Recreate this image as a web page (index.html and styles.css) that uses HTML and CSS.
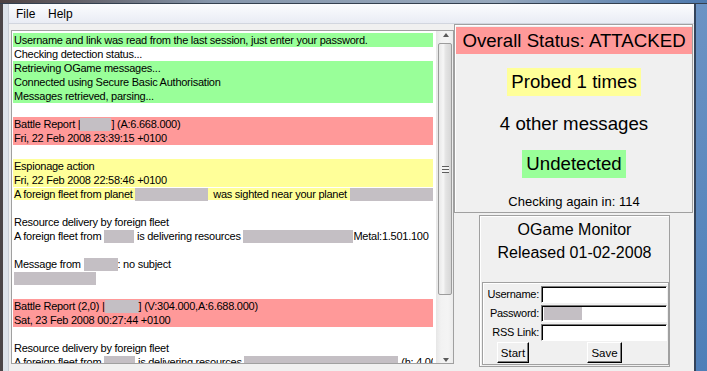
FILE: index.html
```html
<!DOCTYPE html>
<html>
<head>
<meta charset="utf-8">
<title>OGame Monitor</title>
<link rel="stylesheet" href="styles.css">
</head>
<body>
<div class="screen">
  <div class="frame-top"></div>
  <div class="row">
    <div class="frame-left"></div>
    <div class="window">
      <div class="menubar"><span class="menu-item">File</span><span class="menu-item">Help</span></div>
      <div class="client">
        <div class="listbox">
          <div class="items">
            <div class="item green">Username and link was read from the last session, just enter your password.</div>
            <div class="item">Checking detection status...</div>
            <div class="item green">Retrieving OGame messages...</div>
            <div class="item green">Connected using Secure Basic Authorisation</div>
            <div class="item green">Messages retrieved, parsing...</div>
            <div class="item"></div>
            <div class="item pink">Battle Report |<span class="r w31"></span>] (A:6.668.000)</div>
            <div class="item pink">Fri, 22 Feb 2008 23:39:15 +0100</div>
            <div class="item"></div>
            <div class="item yellow">Espionage action</div>
            <div class="item yellow">Fri, 22 Feb 2008 22:58:46 +0100</div>
            <div class="item"><span class="yellow">A foreign fleet from planet <span class="r w73 gap"></span> was sighted near your planet </span><span class="r w90"></span></div>
            <div class="item"></div>
            <div class="item">Resource delivery by foreign fleet</div>
            <div class="item">A foreign fleet from <span class="r w30"></span> is delivering resources <span class="r w110"></span>Metal:1.501.100</div>
            <div class="item"></div>
            <div class="item">Message from <span class="r w34"></span>: no subject</div>
            <div class="item"><span class="r w82"></span></div>
            <div class="item"></div>
            <div class="item pink">Battle Report (2,0) |<span class="r w34"></span>] (V:304.000,A:6.688.000)</div>
            <div class="item pink">Sat, 23 Feb 2008 00:27:44 +0100</div>
            <div class="item"></div>
            <div class="item">Resource delivery by foreign fleet</div>
            <div class="item">A foreign fleet from <span class="r w31"></span> is delivering resources <span class="r w154"></span> (h: 4.000)</div>
          </div>
          <div class="vscroll">
            <div class="arrow-box top"><div class="tri up"></div></div>
            <div class="thumb"><div class="grip"></div></div>
            <div class="track-rest"></div>
            <div class="arrow-box bottom"><div class="tri down"></div></div>
          </div>
        </div>
        <div class="side">
          <div class="status">
            <div class="banner">Overall Status: ATTACKED</div>
            <div class="s-row probed"><span class="badge yellow">Probed 1 times</span></div>
            <div class="s-row others">4 other messages</div>
            <div class="s-row detect"><span class="badge green">Undetected</span></div>
            <div class="checking">Checking again in: 114</div>
          </div>
          <div class="about">
            <div class="title">OGame Monitor</div>
            <div class="title">Released 01-02-2008</div>
            <div class="form">
              <div class="fields">
                <label class="lbl">Username:</label><div class="input"></div>
                <label class="lbl">Password:</label><div class="input"><span class="masked"></span></div>
                <label class="lbl">RSS Link:</label><div class="input"></div>
              </div>
              <div class="buttons">
                <button class="btn start">Start</button>
                <button class="btn save">Save</button>
              </div>
            </div>
          </div>
        </div>
      </div>
    </div>
    <div class="frame-right"></div>
  </div>
</div>
</body>
</html>
```

FILE: styles.css
```css
* { box-sizing: border-box; margin: 0; padding: 0; }
html, body { width: 707px; height: 371px; overflow: hidden; }
body {
  background: #f0f0f0;
  font-family: "Liberation Sans", Arial, sans-serif;
  color: #000;
}
.screen { width: 707px; height: 371px; display: flex; flex-direction: column; }
.frame-top {
  height: 4px;
  background: linear-gradient(to right, #4f4242 0, #8696ab 30%, #97a8bc 70%, #4d79ae 100%);
  border-bottom: 1px solid #34404f;
}
.row { flex: 1; display: flex; min-height: 0; }
.frame-left {
  width: 9px;
  background: linear-gradient(to right, #4b4547 0 3px, #dde3ea 3px 8px, #c9ced6 8px);
}
.frame-right {
  width: 13px;
  border-left: 2px solid #33435a;
  background: linear-gradient(#6b93c4, #4f7fb8);
}
.window { width: 685px; display: flex; flex-direction: column; background: #f0f0f0; }
.menubar {
  height: 20px;
  display: flex;
  gap: 12.7px;
  padding: 1px 0 0 7px;
  line-height: 19px;
  font-size: 12px;
  background: linear-gradient(#fbfcfe, #e9ecf4);
  border-bottom: 1px solid #d2d6df;
}
.client { flex: 1; display: flex; min-height: 0; }

.listbox {
  margin: 6px 0 0 2px;
  width: 443px;
  height: 334px;
  border: 1px solid #a0a0a0;
  background: #fff;
  display: flex;
}
.items {
  width: 420px;
  margin-left: 1px;
  padding-top: 2px;
  overflow: hidden;
  font-size: 11px;
  letter-spacing: -0.25px;
}
.item {
  height: 14px;
  line-height: 14px;
  padding-left: 1px;
  white-space: nowrap;
  overflow: hidden;
}
.green { background: #99ff99; }
.pink { background: #ff9999; }
.yellow { background: #ffff99; }
.r {
  display: inline-block;
  vertical-align: top;
  margin-top: 1px;
  height: 13px;
  background: #c4bfc4;
}
.gap { margin-right: 2px; }
.w30 { width: 30px; } .w31 { width: 31px; } .w34 { width: 34px; }
.w73 { width: 73px; } .w82 { width: 82px; } .w90 { width: 90px; }
.w110 { width: 110px; } .w154 { width: 154px; }

.vscroll {
  width: 17px;
  margin-left: 3px;
  display: flex;
  flex-direction: column;
  background: linear-gradient(to right, #e6e6e6, #f2f2f2 30%, #f4f4f4 70%, #ececec);
}
.arrow-box { height: 12px; display: flex; justify-content: center; padding-left: 3px; }
.arrow-box.top { align-items: flex-start; padding-top: 2px; }
.arrow-box.bottom { align-items: flex-end; padding-bottom: 1px; }
.tri { width: 0; height: 0; border-left: 3.5px solid transparent; border-right: 3.5px solid transparent; }
.tri.up { border-bottom: 4px solid #5a5a5a; }
.tri.down { border-top: 4px solid #5a5a5a; }
.thumb {
  margin: 0 1px 0 2px;
  height: 252px;
  border: 1px solid #9c9c9c;
  border-radius: 2px;
  background: linear-gradient(to right, #e8e8e8, #f6f6f6 35%, #e4e4e4 55%, #d6d6d6);
  display: flex;
  align-items: center;
  justify-content: center;
}
.grip {
  width: 7px;
  height: 7px;
  background: repeating-linear-gradient(#5e5e5e 0 1px, #f4f4f4 1px 3px);
}
.track-rest { flex: 1; }

.side { width: 240px; display: flex; flex-direction: column; }
.status {
  width: 239px;
  height: 189px;
  border: 1px solid #a0a0a0;
  box-shadow: inset 1px 1px 0 #fff;
  padding: 2px 0 2px 1px;
  text-align: center;
  font-size: 14pt;
}
.banner { height: 27px; line-height: 27px; background: #ff9999; white-space: nowrap; }
.s-row { display: flex; justify-content: center; }
.badge { height: 28px; line-height: 28px; padding: 0 4px; }
.probed { margin-top: 14px; }
.others { margin-top: 14px; height: 27px; line-height: 27px; }
.detect { margin-top: 13px; }
.checking { margin-top: 16px; font-size: 13px; line-height: 16px; }

.about {
  margin: 2px 0 0 25px;
  width: 191px;
  border: 1px solid #a0a0a0;
  box-shadow: inset 1px 1px 0 #fff;
  padding: 2px 0 1px 0;
}
.title { font-size: 16px; line-height: 23px; text-align: center; }
.form {
  margin: 18px 0 0 2px;
  width: 187px;
  border: 1px solid #a0a0a0;
  box-shadow: inset 1px 1px 0 #fff;
  padding: 3px 1px 1px 1px;
  display: flex;
  flex-direction: column;
}
.fields {
  display: grid;
  grid-template-columns: 55px 126px;
  column-gap: 2px;
  row-gap: 2px;
  font-size: 11px;
  letter-spacing: -0.25px;
}
.lbl { text-align: right; line-height: 17px; white-space: nowrap; }
.input {
  height: 17px;
  background: #fff;
  border: 1px solid;
  border-color: #7a7a7a #fff #fff #7a7a7a;
  box-shadow: inset 1px 1px 0 #000;
  padding: 1px 0 0 2px;
}
.masked { display: block; width: 38px; height: 13px; background: #c4bfc4; }
.buttons { display: flex; margin-top: 1px; }
.btn {
  height: 21px;
  font-family: "Liberation Sans", Arial, sans-serif;
  font-size: 11.5px;
  background: #f0f0f0;
  border: 1px solid;
  border-color: #fff #000 #000 #fff;
  box-shadow: inset -1px -1px 0 #808080;
  color: #000;
}
.start { width: 32px; margin-left: 13px; }
.save { width: 35px; margin-left: 58px; }
```
